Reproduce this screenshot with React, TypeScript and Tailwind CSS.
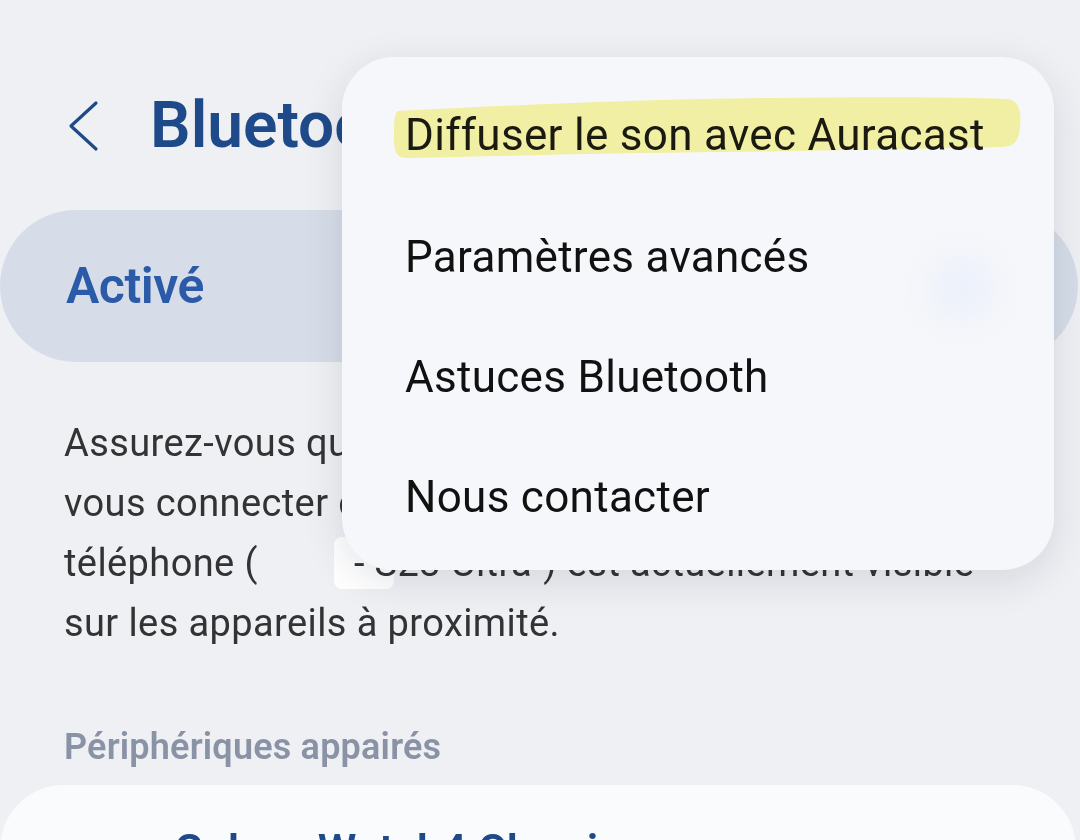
import React from "react";

const menuItems = [
  "Paramètres avancés",
  "Astuces Bluetooth",
  "Nous contacter",
];

export default function App() {
  return (
    <div
      className="relative w-[1080px] h-[840px] overflow-hidden bg-[#eff0f4]"
      style={{ fontFamily: "Roboto, 'Noto Sans', sans-serif" }}
    >
      {/* HEADER */}
      <div className="mt-[92px] h-[68px] flex items-center pl-[66px]">
        <svg width="34" height="52" viewBox="0 0 34 52" fill="none">
          <path
            d="M30 3 L5 26 L30 49"
            stroke="#1f4a8a"
            strokeWidth="3.2"
            strokeLinecap="round"
            strokeLinejoin="round"
          />
        </svg>
        <h1 className="ml-[50px] text-[64px] font-semibold text-[#1f4a8a]">
          Bluetooth
        </h1>
      </div>

      {/* MASTER SWITCH */}
      <div className="mt-[50px] mr-[2px] h-[152px] rounded-full bg-[#d6dde8] flex items-center justify-between pl-[66px] pr-[78px]">
        <span className="text-[50px] font-semibold text-[#2b5ba8] tracking-[-0.5px]">
          Activé
        </span>
        <div className="w-[92px] h-[50px] rounded-full bg-[#3e7bf5] flex items-center justify-end pr-[6px]">
          <div className="w-[38px] h-[38px] rounded-full bg-white" />
        </div>
      </div>

      {/* DESCRIPTION */}
      <div className="mt-[51px] px-[64px] text-[38px] leading-[60px] text-[#333] tracking-[0.4px]">
        <p>Assurez-vous que l'appareil auquel vous souhaitez</p>
        <p>vous connecter est visible. Le nom de votre</p>
        <p className="flex items-center whitespace-nowrap">
          <span>téléphone (</span>
          <span className="ml-[76px] w-[60px] h-[52px] rounded-[8px] bg-white shrink-0" />
          <span className="ml-[-40px]">- S23 Ultra") est actuellement visible</span>
        </p>
        <p>sur les appareils à proximité.</p>
      </div>

      {/* PAIRED DEVICES */}
      <p className="mt-[70px] px-[64px] text-[36px] leading-[48px] font-semibold text-[#8a93a5] tracking-[0.2px]">
        Périphériques appairés
      </p>
      <div className="mt-[14px] mr-[4px] h-[300px] rounded-t-[64px] bg-[#fafbfc] pl-[174px] pt-[40px]">
        <p className="text-[44px] font-semibold text-[#1f4a8a] leading-[52px]">
          Galaxy Watch4 Classic
        </p>
      </div>

      {/* OVERFLOW MENU */}
      <div className="absolute left-[342px] top-[57px] w-[712px] rounded-[52px] bg-[#f6f7fa] shadow-[0_10px_40px_rgba(20,30,50,0.12)] pt-[16px] pb-[13px] overflow-hidden">
        {/* faint glow of the switch under the menu */}
        <div className="absolute left-[585px] top-[196px] w-[70px] h-[70px] rounded-full bg-[#edf1fb] blur-[14px]" />
        <div className="relative h-[124px] flex items-center pl-[63px]">
          <span className="relative text-[44px] text-[#1a1a1a] tracking-[0.3px]">
            Diffuser le son avec Auracast
          </span>
          <svg
            className="absolute left-[50px] top-[22px] mix-blend-multiply"
            width="632"
            height="66"
            viewBox="0 0 632 66"
          >
            <path
              d="M6 16 C 120 10, 260 4, 380 3 C 470 2, 560 2, 616 4 C 626 6, 630 14, 628 32 C 627 46, 622 52, 610 52 C 520 54, 420 56, 330 57 C 220 58, 110 61, 14 63 C 6 63, 2 58, 2 44 C 2 28, 2 18, 6 16 Z"
              fill="#faf7a6"
            />
          </svg>
        </div>
        {menuItems.map((item) => (
          <div key={item} className="relative h-[120px] flex items-center pl-[63px]">
            <span className="text-[44px] text-[#111] tracking-[0.3px]">{item}</span>
          </div>
        ))}
      </div>
    </div>
  );
}
